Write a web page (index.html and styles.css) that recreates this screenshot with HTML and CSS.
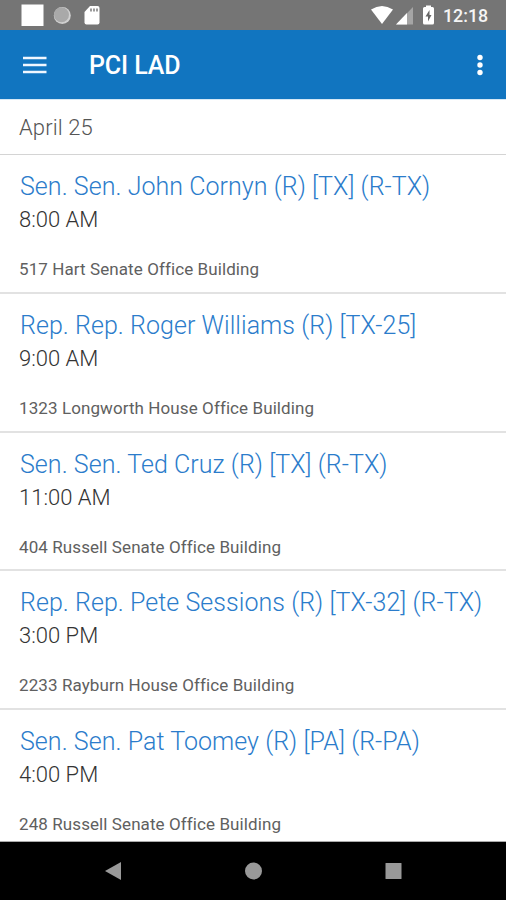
FILE: index.html
```html
<!DOCTYPE html>
<html lang="en">
<head>
<meta charset="utf-8">
<title>PCI LAD</title>
<link rel="stylesheet" href="styles.css">
</head>
<body>
<div class="screen">
  <header class="status">
    <svg class="status-left" width="110" height="30" viewBox="0 0 110 30"><rect x="21.500" y="4.500" width="22" height="21.500" fill="#fff"/><circle cx="62.300" cy="15.500" r="8.500" fill="#d0d0d0"/><circle cx="61.500" cy="14.700" r="7.500" fill="#a9a9a9"/><path d="M90 6h7.500q2 0 2 2v14.500q0 2-2 2H86.500q-2 0-2-2V12z" fill="#fff"/><path d="M91 8.500v3M94 8.500v3M97 8.500v3" stroke="#8a8a8a" stroke-width="1.700"/></svg>
    <svg class="status-right" width="66" height="30" viewBox="0 0 66 30"><path d="M0 9.500Q11 2.500 22 9.500L11 24z" fill="#fff"/><path d="M42 7v17.500H25z" fill="#a5a5a5"/><path d="M36 13v11.500H25z" fill="#fff"/><path d="M55 5.500h5v1.500h1.500q1.500 0 1.500 1.500v14.500q0 1.500-1.500 1.500h-8q-1.500 0-1.500-1.500V8.500q0-1.500 1.500-1.500H55z" fill="#fff"/><path d="M58.500 10l-4 6.500h2.500v5l3.500-6.500h-2z" fill="#666"/></svg>
    <span class="clock">12:18</span>
  </header>
  <nav class="toolbar">
    <svg class="menu" width="24" height="18" viewBox="0 0 24 18"><path d="M0 2h23.500M0 9h23.500M0 16h23.500" stroke="#f0f7ff" stroke-width="2.700"/></svg>
    <h1>PCI LAD</h1>
    <svg class="more" width="6" height="22" viewBox="0 0 6 22"><g fill="#fff"><circle cx="3" cy="3.500" r="2.700"/><circle cx="3" cy="11" r="2.700"/><circle cx="3" cy="18.500" r="2.700"/></g></svg>
  </nav>
  <main>
    <div class="date">April 25</div>
    <article><h2>Sen. Sen. John Cornyn (R) [TX] (R-TX)</h2><time>8:00 AM</time><p>517 Hart Senate Office Building</p></article>
    <article><h2>Rep. Rep. Roger Williams (R) [TX-25]</h2><time>9:00 AM</time><p>1323 Longworth House Office Building</p></article>
    <article><h2>Sen. Sen. Ted Cruz (R) [TX] (R-TX)</h2><time>11:00 AM</time><p>404 Russell Senate Office Building</p></article>
    <article><h2>Rep. Rep. Pete Sessions (R) [TX-32] (R-TX)</h2><time>3:00 PM</time><p>2233 Rayburn House Office Building</p></article>
    <article><h2>Sen. Sen. Pat Toomey (R) [PA] (R-PA)</h2><time>4:00 PM</time><p>248 Russell Senate Office Building</p></article>
  </main>
  <footer>
    <svg width="506" height="58" viewBox="0 0 506 58"><g fill="#999"><path d="M121 20v18l-16-9z"/><circle cx="253.500" cy="29" r="8.500"/><rect x="385.500" y="21" width="16" height="16" rx=".5"/></g></svg>
  </footer>
</div>
</body>
</html>
```
FILE: styles.css
```css
* { box-sizing: border-box; }
body { margin: 0; font-family: Roboto, sans-serif; background: #fff; }
svg { display: block; flex: none; }
h1, h2, p { margin: 0; }
.screen { width: 506px; height: 900px; display: flex; flex-direction: column; overflow: hidden; }
.status { height: 30px; flex: none; background: #757575; color: #f5f5f5; display: flex; align-items: center; padding-right: 18px; }
.status-right { margin-left: auto; }
.clock { font-size: 17.800px; font-weight: 500; line-height: 30px; width: 45px; margin-left: 6px; padding-top: 1px; white-space: nowrap; }
.toolbar { height: 69px; flex: none; background: #1175c0; color: #fff; display: flex; align-items: center; padding: 0 23px; }
.toolbar h1 { font-size: 25px; font-weight: 500; margin-left: 42px; line-height: 30px; letter-spacing: -.1px; padding-top: 3px; }
.more { margin-left: auto; }
main { flex: none; height: 743px; overflow: hidden; border-top: 1px solid #d5e8f5; border-bottom: 1px solid #aaa; }
.date { height: 55px; border-bottom: 1px solid #d4d4d4; padding: 13px 19px 0; font-size: 22px; line-height: 30px; font-weight: 300; letter-spacing: .1px; color: #555; }
article { height: 138.750px; border-bottom: 2px solid #e2e2e2; padding: 16px 19px 0; color: #333; }
h2 { font-size: 25px; line-height: 32px; font-weight: 300; letter-spacing: .05px; padding-left: 1px; color: #2b7ccb; white-space: nowrap; }
time { display: block; font-size: 22px; line-height: 34px; font-weight: 300; }
p { font-size: 17px; line-height: 24px; letter-spacing: .09px; font-variant-ligatures: none; margin-top: 20px; color: #606060; }
footer { height: 58px; flex: none; background: #000; }
```
